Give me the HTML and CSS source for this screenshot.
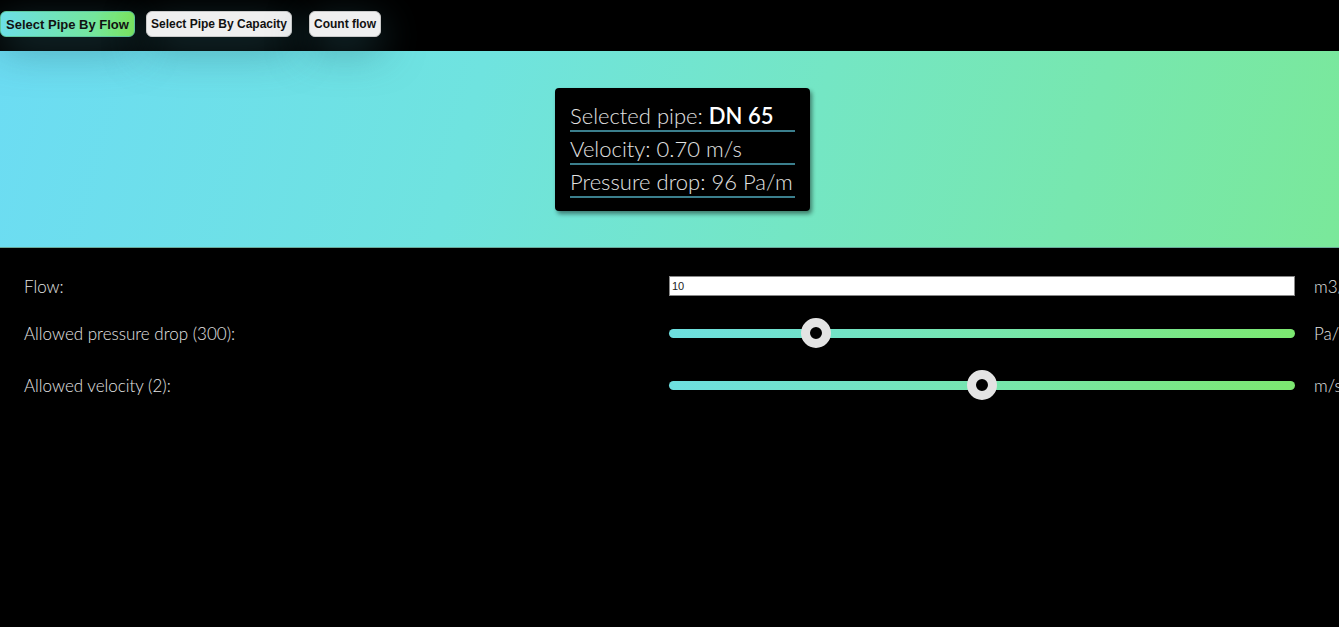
FILE: index.html
```html
<!DOCTYPE html>
<html>
<head>
<meta charset="utf-8">
<link rel="stylesheet" href="styles.css">
</head>
<body>
<nav class="topbar">
  <button class="tab tab-active">Select Pipe By Flow</button>
  <button class="tab tab-cap">Select Pipe By Capacity</button>
  <button class="tab tab-count">Count flow</button>
</nav>
<section class="hero">
  <div class="result">
    <div class="result-row">Selected pipe: <b>DN 65</b></div>
    <div class="result-row">Velocity: 0.70 m/s</div>
    <div class="result-row">Pressure drop: 96 Pa/m</div>
  </div>
</section>
<section class="form">
  <label class="label" for="flow">Flow:</label>
  <div class="control"><input id="flow" class="text-input" type="text" value="10"></div>
  <span class="unit">m3/h</span>

  <label class="label" for="pd">Allowed pressure drop (300):</label>
  <div class="control"><input id="pd" class="range" type="range" min="100" max="1000" value="300"></div>
  <span class="unit">Pa/m</span>

  <label class="label" for="vel">Allowed velocity (2):</label>
  <div class="control"><input id="vel" class="range" type="range" min="0" max="4" step="0.1" value="2"></div>
  <span class="unit">m/s</span>
</section>
</body>
</html>
```

FILE: styles.css
```css
html, body {
  margin: 0;
  padding: 0;
  background: #000;
  overflow: hidden;
}
body {
  font-family: Lato, "Open Sans", sans-serif;
  color: #ddd;
  width: 1339px;
  height: 627px;
}
.topbar {
  position: relative;
  z-index: 1;
  height: 51px;
  box-sizing: border-box;
  padding-top: 11px;
  display: flex;
  align-items: flex-start;
  background: #000;
}
.tab {
  height: 26px;
  box-sizing: border-box;
  font-family: "Liberation Sans", Arial, sans-serif;
  font-weight: bold;
  font-size: 12px;
  white-space: nowrap;
  color: #111;
  background: #efefef;
  border: 1px solid #c9c9c9;
  border-radius: 6px;
  padding: 0;
  margin: 0;
  text-align: center;
  box-shadow: 0 12px 40px rgba(50, 105, 115, 0.55);
}
.tab-active {
  width: 135px;
  font-size: 13px;
  background: linear-gradient(90deg, #6cdfe6 0%, #74e69c 70%, #7de85e 100%);
  border-color: #5fc8a0;
}
.tab-cap {
  margin-left: 11px;
  width: 146px;
}
.tab-count {
  margin-left: 17px;
  width: 72px;
}
.hero {
  height: 197px;
  box-sizing: border-box;
  padding-top: 37px;
  padding-left: 555px;
  background: linear-gradient(105deg, #6cdcf3 0%, #6fe3df 35%, #74e6c4 60%, #7ae89a 100%);
  border-bottom: 1px solid #6aa89a;
}
.result {
  width: 255px;
  box-sizing: border-box;
  padding: 11px 15px 13px;
  background: #000;
  border-radius: 4px;
  box-shadow: 2px 3px 4px rgba(0, 0, 0, 0.45);
}
.result-row {
  font-weight: 300;
  font-size: 22px;
  line-height: 29px;
  padding-top: 2px;
  border-bottom: 2px solid #3b7f8d;
  color: #e2e2e2;
  white-space: nowrap;
}
.result-row b {
  font-weight: 600;
  color: #fff;
}
.form {
  display: grid;
  grid-template-columns: 626px 626px max-content;
  grid-template-rows: 20px 30px 30px;
  column-gap: 19px;
  row-gap: 22px;
  align-items: center;
  padding: 28px 0 0 24px;
  width: 1400px;
}
.label {
  font-size: 17px;
  font-weight: 300;
  color: #e4e4e4;
}
.unit {
  font-size: 17px;
  font-weight: 300;
  color: #e4e4e4;
}
.control {
  display: flex;
  align-items: center;
}
.text-input {
  width: 626px;
  height: 20px;
  box-sizing: border-box;
  margin: 0;
  border: 1px solid #888;
  padding: 0 2px;
  font-family: "Liberation Sans", Arial, sans-serif;
  font-size: 11px;
  color: #222;
  background: #fff;
}
.range {
  -webkit-appearance: none;
  appearance: none;
  width: 626px;
  height: 30px;
  margin: 0;
  background: transparent;
}
.range::-webkit-slider-runnable-track {
  height: 9px;
  border-radius: 5px;
  background: linear-gradient(90deg, #6ddfe0 0%, #76e6b0 50%, #7ce870 100%);
}
.range::-webkit-slider-thumb {
  -webkit-appearance: none;
  appearance: none;
  width: 30px;
  height: 30px;
  margin-top: -10.5px;
  border-radius: 50%;
  box-sizing: border-box;
  background: #000;
  border: 9px solid #e3e3e3;
}
```
